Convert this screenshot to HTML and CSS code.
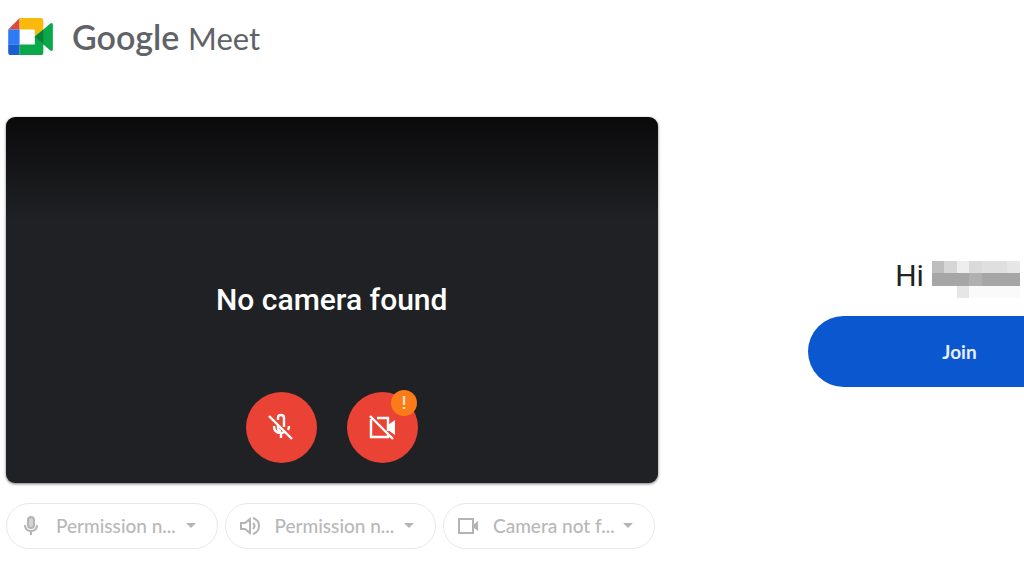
FILE: index.html
```html
<!DOCTYPE html>
<html lang="en">
<head>
<meta charset="utf-8">
<meta name="viewport" content="width=device-width, initial-scale=1">
<title>Google Meet</title>
<link rel="stylesheet" href="styles.css">
</head>
<body>
<div class="page">
  <header class="header">
    <svg class="logo" viewBox="0 0 48 40" aria-hidden="true">
      <path fill="#dc4a3c" d="M0 12 12 0v12z"/>
      <path fill="#2f7bf5" d="M0 12h12v16H0z"/>
      <path fill="#1a5fd0" d="M0 28h12v11H3q-3 0-3-3z"/>
      <path fill="#fbb90c" d="M12 0h22q3 0 3 3v9l-9 7v-7H12z"/>
      <path fill="#09a94a" d="M12 28h16v-9l9-7 7-6q3-2 3 1v26q0 3-3 1l-7-6v8q0 3-3 3H12z"/>
      <path fill="#0b8038" d="M28 20l9-8v15z"/>
    </svg>
    <div class="brand"><span class="brand-name">Google</span> <span class="brand-product">Meet</span></div>
  </header>
  <main class="lobby">
    <section class="setup" aria-label="Device preview">
      <div class="preview">
        <p class="preview-message">No camera found</p>
        <div class="preview-controls">
          <button class="toggle" type="button" aria-label="Turn on microphone">
            <svg class="toggle-icon" viewBox="0 0 28 28" fill="none" stroke="#fff" stroke-width="2.4" aria-hidden="true">
              <path d="M11 7V5q0-3 3-3t3 3v9M11 12v3q0 3 3 3M7 13q0 7 7 7 3 0 4-2M22 13q0 2-1 4M14 20v5"/>
              <path d="M2 3l23 23"/>
            </svg>
          </button>
          <button class="toggle" type="button" aria-label="Turn on camera">
            <svg class="toggle-icon" viewBox="0 0 28 28" fill="none" stroke="#fff" stroke-width="2.4" aria-hidden="true">
              <path d="M9 5h11v13M3 6v18h17v-2M2 3l23 23"/>
              <path fill="#fff" stroke="none" d="M20 12l7-5v15l-7-5z"/>
            </svg>
            <svg class="badge" viewBox="0 0 26 26" aria-hidden="true">
              <circle cx="13" cy="13" r="13" fill="#fa7b17"/>
              <path stroke="#ffe0c0" stroke-width="2.4" d="M13 6v9M13 17v2"/>
            </svg>
          </button>
        </div>
      </div>
      <div class="devices">
        <label class="device">
          <svg class="device-icon" viewBox="0 0 22 22" fill="none" stroke="currentColor" stroke-width="2" aria-hidden="true">
            <rect x="8" y="2" width="6" height="11" rx="3" fill="#d4d4d4"/>
            <path d="M5 10q0 6 6 6t6-6M11 16v4"/>
          </svg>
          <select class="device-select" aria-label="Microphone"><option>Permission n...</option></select>
          <svg class="caret" viewBox="0 0 10 6" aria-hidden="true"><path fill="currentColor" d="M0 0h10L5 5z"/></svg>
        </label>
        <label class="device">
          <svg class="device-icon" viewBox="0 0 22 22" fill="none" stroke="currentColor" stroke-width="2" aria-hidden="true">
            <path d="M2 8h4l5-4v14l-5-4H2zM14 8q3 3 0 6M14 3q6 2 6 8t-6 8"/>
          </svg>
          <select class="device-select" aria-label="Speaker"><option>Permission n...</option></select>
          <svg class="caret" viewBox="0 0 10 6" aria-hidden="true"><path fill="currentColor" d="M0 0h10L5 5z"/></svg>
        </label>
        <label class="device">
          <svg class="device-icon" viewBox="0 0 22 22" fill="none" stroke="currentColor" stroke-width="2" aria-hidden="true">
            <path d="M2 4h14v14H2z"/><path fill="currentColor" stroke="none" d="M16 10l5-4v10l-5-4z"/>
          </svg>
          <select class="device-select" aria-label="Camera"><option>Camera not f...</option></select>
          <svg class="caret" viewBox="0 0 10 6" aria-hidden="true"><path fill="currentColor" d="M0 0h10L5 5z"/></svg>
        </label>
      </div>
    </section>
    <section class="join" aria-label="Join the meeting">
      <h1 class="greeting">Hi
        <svg class="masked-name" viewBox="0 0 88 37" shape-rendering="crispEdges" role="img" aria-label="Name hidden">
          <path fill="#bebebe" d="M0 0h12v12H0z"/><path fill="#d6d6d6" d="M12 0h13v12H12z"/>
          <path fill="#eee" d="M25 0h12v12H25z"/><path fill="#dadada" d="M37 0h13v12H37z"/>
          <path fill="#dfdfdf" d="M50 0h25v12H50z"/><path fill="#e6e6e6" d="M75 0h13v12H75z"/>
          <path fill="#a6a6a6" d="M0 12h88v13H0z"/><path fill="#b0b0b0" d="M37 12h13v13H37z"/>
          <path fill="#e6e6e6" d="M25 25h12v12H25z"/><path fill="#fafafa" d="M37 25h51v12H37z"/>
        </svg>
      </h1>
      <button class="join-button" type="button">Join</button>
    </section>
  </main>
</div>
</body>
</html>
```
FILE: styles.css
```css
* {
  box-sizing: border-box;
}

body {
  margin: 0;
  background: #fff;
  font-family: Lato, "Liberation Sans", sans-serif;
}

.page {
  min-height: 100vh;
  padding: 14px 0 24px 6px;
  overflow: hidden;
}

.header {
  display: flex;
  align-items: center;
  gap: 18px;
  height: 46px;
  padding-left: 2px;
}

.logo {
  width: 46px;
  height: 38px;
}

.brand {
  color: #5f6368;
  font-size: 34px;
  line-height: 46px;
  white-space: nowrap;
}

.brand-name {
  font-weight: 600;
}

.brand-product {
  font-size: 31px;
}

.lobby {
  display: grid;
  grid-template-columns: minmax(0, 16fr) minmax(0, 9fr);
  margin-top: 57px;
}

.preview {
  display: flex;
  flex-direction: column;
  justify-content: flex-end;
  align-items: center;
  aspect-ratio: 652 / 366;
  padding-bottom: 20px;
  border-radius: 9px;
  background: #202124 linear-gradient(#0a0a0b, #202124) no-repeat top / 100% 104px;
  box-shadow: 0 1px 3px #777;
}

.preview-message {
  margin: 0 0 74px;
  color: #fff;
  font-family: Roboto, sans-serif;
  font-size: 30px;
  font-weight: 500;
  line-height: 36px;
}

.preview-controls {
  display: flex;
  gap: 30px;
}

.toggle {
  position: relative;
  display: grid;
  place-items: center;
  width: 71px;
  height: 71px;
  padding: 0;
  border: 0;
  border-radius: 50%;
  background: #ea4335;
}

.toggle-icon {
  width: 28px;
  height: 28px;
}

.badge {
  position: absolute;
  top: -2px;
  right: 1px;
  width: 26px;
  height: 26px;
}

.devices {
  display: grid;
  grid-template-columns: repeat(3, minmax(0, 1fr));
  gap: 7px;
  margin-top: 20px;
  padding-right: 3px;
}

.device {
  display: flex;
  align-items: center;
  height: 46px;
  padding: 0 21px 0 13px;
  border: 1px solid #e8e8e8;
  border-radius: 23px;
  color: #b4b4b4;
}

.device-icon {
  flex: none;
  width: 22px;
  height: 22px;
}

.device-select {
  flex: 1;
  min-width: 0;
  margin-left: 14px;
  padding: 0;
  border: 0;
  appearance: none;
  background: none;
  color: #b8b8b8;
  font: 500 19px/24px Lato, "Liberation Sans", sans-serif;
}

.caret {
  flex: none;
  width: 10px;
  height: 6px;
}

.join {
  display: flex;
  flex-direction: column;
  align-items: flex-start;
  padding: 137px 0 0 150px;
}

.greeting {
  display: flex;
  align-items: center;
  justify-content: center;
  gap: 8px;
  width: 300px;
  margin: 0 0 18px;
  color: #202124;
  font-family: Roboto, sans-serif;
  font-size: 30px;
  font-weight: 400;
  line-height: 44px;
}

.masked-name {
  width: 88px;
  height: 37px;
  margin-top: 7px;
}

.join-button {
  width: 304px;
  height: 71px;
  border: 0;
  border-radius: 36px;
  background: #0b57d0;
  color: #e8f0fe;
  font: 700 19px/24px Lato, "Liberation Sans", sans-serif;
}
```
